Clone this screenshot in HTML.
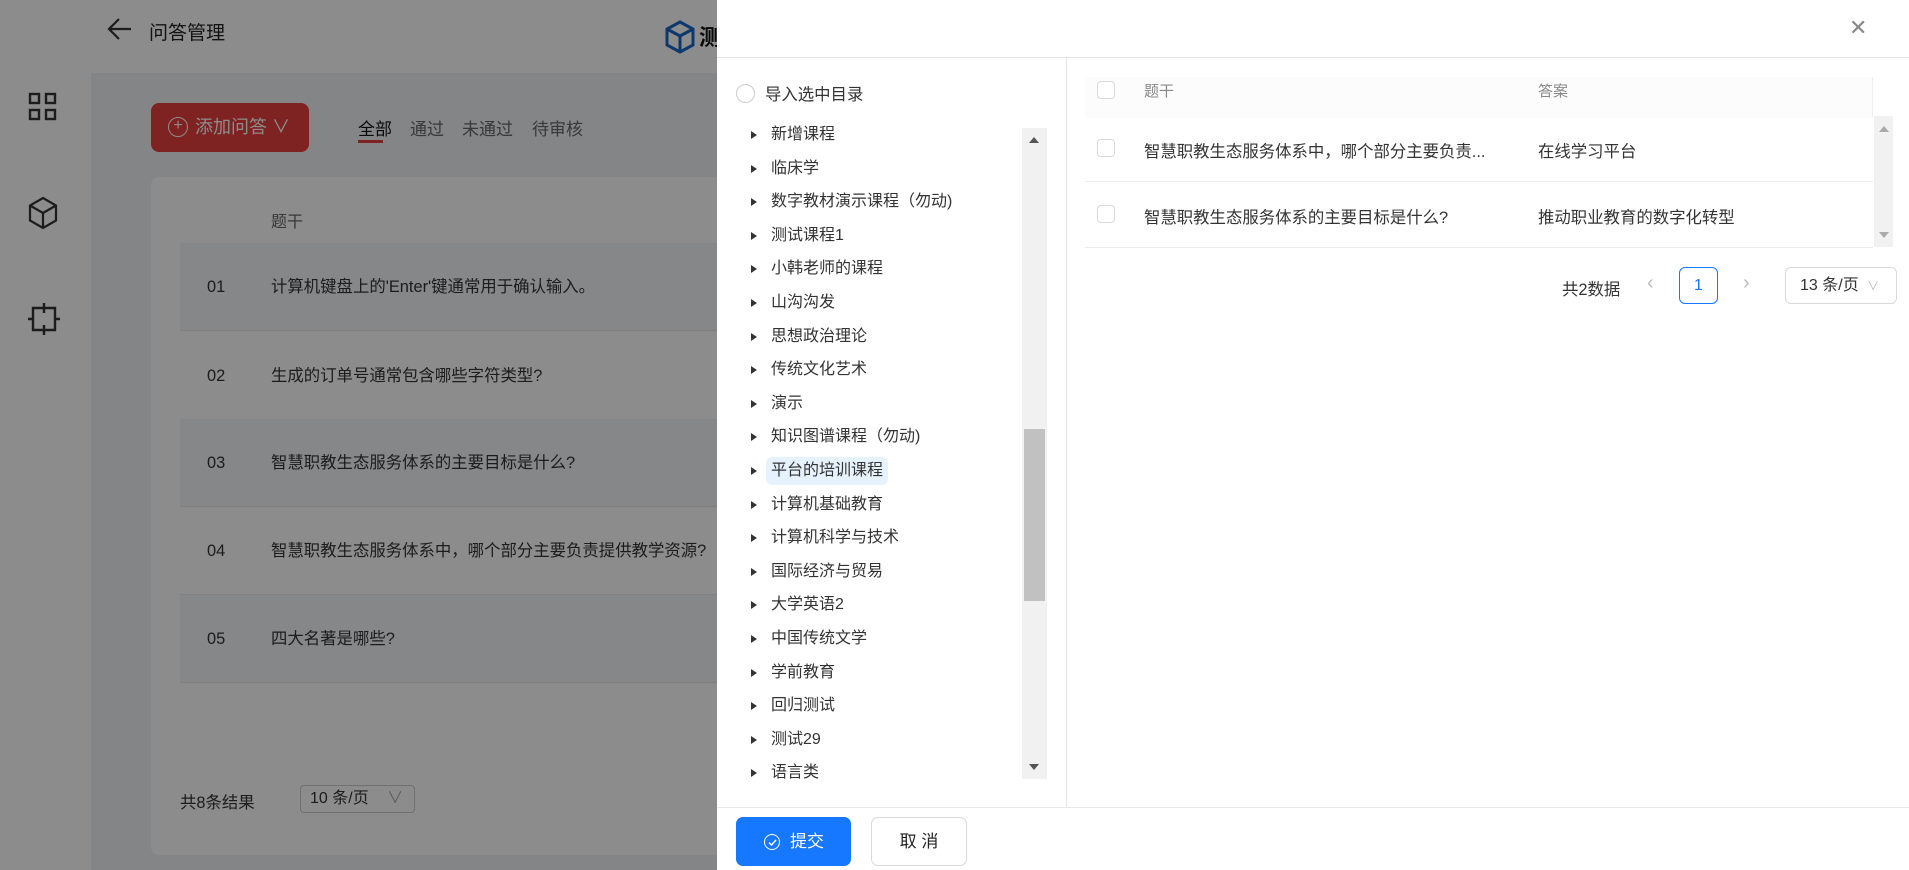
<!DOCTYPE html>
<html><head><meta charset="utf-8"><style>
*{box-sizing:border-box;margin:0;padding:0}
body{width:1909px;height:870px;overflow:hidden;position:relative;font-family:"Liberation Sans","Noto Sans CJK SC",sans-serif;background:#f0f2f5;color:#333}
.abs{position:absolute}
.side{left:0;top:0;width:91px;height:870px;background:#fff}
.hdr{left:91px;top:0;width:1818px;height:73px;background:#fff}
.card{left:151px;top:177px;width:1700px;height:678px;background:#fff;border-radius:8px}
.row{left:180px;width:1600px;height:88px;border-bottom:1px solid #e8e8e8;font-size:16.4px;color:#333;line-height:88px}
.row.s{background:#f5f6f8}
.row .n{position:absolute;left:27px;top:0}
.row .t{position:absolute;left:91px;top:0}
.mask{left:0;top:0;width:1909px;height:870px;background:rgba(0,0,0,.45)}
.drawer{left:717px;top:0;width:1192px;height:870px;background:#fff}
.ti{position:absolute;left:54px;font-size:16px;color:#333;height:28px;line-height:28px;white-space:nowrap}
.ti:before{content:"";position:absolute;left:-20px;top:10px;border-left:6px solid #333;border-top:4px solid transparent;border-bottom:4px solid transparent}
.ti span{padding:0 5px;margin-left:-5px;border-radius:6px}
.cb{position:absolute;width:18px;height:18px;border:1px solid #d9d9d9;border-radius:4px;background:#fff}
</style></head><body>
<div class="abs side">
<svg class="abs" style="left:28px;top:92px" width="30" height="30" viewBox="0 0 30 30" fill="none" stroke="#333" stroke-width="2.4"><rect x="2" y="2" width="9" height="9"/><rect x="18" y="2" width="9" height="9"/><rect x="2" y="18" width="9" height="9"/><rect x="18" y="18" width="9" height="9"/></svg>
<svg class="abs" style="left:27px;top:196px" width="32" height="34" viewBox="0 0 32 34" fill="none" stroke="#333" stroke-width="2.2"><path d="M16 2L29 9.5V24.5L16 32L3 24.5V9.5Z M3 9.5L16 17L29 9.5 M16 17V32"/></svg>
<svg class="abs" style="left:27px;top:302px" width="34" height="34" viewBox="0 0 34 34" fill="none" stroke="#333" stroke-width="2.4"><path d="M6 6H28V28H6Z M17 1V11 M17 23V33 M1 17H6 M28 17H33"/></svg>
</div>
<div class="abs hdr">
<svg class="abs" style="left:16px;top:17px" width="26" height="24" viewBox="0 0 26 24" fill="none" stroke="#333" stroke-width="2.2"><path d="M24 12H3 M12 2L2 12L12 22"/></svg>
<div class="abs" style="left:58px;top:18px;font-size:19px;color:#222">问答管理</div>
<svg class="abs" style="left:574px;top:20px" width="30" height="34" viewBox="0 0 30 34" fill="none" stroke="#1767c8" stroke-width="3"><path d="M15 2L28 9V25L15 32L2 25V9Z M2 9L15 16L28 9 M15 16V32"/></svg>
<div class="abs" style="left:608px;top:20px;font-size:22px;font-weight:bold;color:#111">测</div>
</div>
<div class="abs" style="left:151px;top:103px;width:158px;height:49px;background:#e53e3e;border-radius:8px;color:#fff;font-size:18px;line-height:49px;padding-left:44px">添加问答 ∨</div>
<div class="abs" style="left:168px;top:117px;width:20px;height:20px;border:1.5px solid #fff;border-radius:50%;color:#fff;font-size:16px;line-height:16px;text-align:center">+</div>
<div class="abs" style="left:358px;top:115px;font-size:17px;color:#111">全部</div>
<div class="abs" style="left:358px;top:140px;width:25px;height:3px;background:#e53e3e"></div>
<div class="abs" style="left:410px;top:115px;font-size:17px;color:#666">通过</div>
<div class="abs" style="left:462px;top:115px;font-size:17px;color:#666">未通过</div>
<div class="abs" style="left:532px;top:115px;font-size:17px;color:#666">待审核</div>
<div class="abs card"></div>
<div class="abs" style="left:271px;top:208px;font-size:16px;color:#666">题干</div>
<div class="abs row s" style="top:243px"><span class="n">01</span><span class="t">计算机键盘上的'Enter'键通常用于确认输入。</span></div>
<div class="abs row" style="top:332px"><span class="n">02</span><span class="t">生成的订单号通常包含哪些字符类型?</span></div>
<div class="abs row s" style="top:419px"><span class="n">03</span><span class="t">智慧职教生态服务体系的主要目标是什么?</span></div>
<div class="abs row" style="top:507px"><span class="n">04</span><span class="t">智慧职教生态服务体系中，哪个部分主要负责提供教学资源?</span></div>
<div class="abs row s" style="top:595px"><span class="n">05</span><span class="t">四大名著是哪些?</span></div>
<div class="abs" style="left:180px;top:789px;font-size:16.4px;color:#333">共8条结果</div>
<div class="abs" style="left:300px;top:785px;width:115px;height:28px;border:1px solid #ccc;border-radius:4px;font-size:16px;line-height:26px;padding-left:9px;color:#333;white-space:nowrap">10 条/页 <span style="color:#aaa;margin-left:14px">∨</span></div>
<div class="abs mask"></div>
<div class="abs drawer">
<div class="abs" style="left:0;top:57px;width:1192px;height:1px;background:#e5e5e5"></div>
<div class="abs" style="left:1132px;top:15px;font-size:22px;color:#888">✕</div>
<div class="abs" style="left:349px;top:58px;width:1px;height:749px;background:#e5e5e5"></div>
<div class="abs" style="left:19px;top:84px;width:19px;height:19px;border:1px solid #ccc;border-radius:50%"></div>
<div class="abs" style="left:48px;top:81px;font-size:16.4px;color:#333">导入选中目录</div>
<div class="abs" style="left:0;top:121px;width:349px;height:660px">
<div class="ti" style="top:0"><span>新增课程</span></div>
<div class="ti" style="top:33.6px"><span>临床学</span></div>
<div class="ti" style="top:67.2px"><span>数字教材演示课程（勿动)</span></div>
<div class="ti" style="top:100.8px"><span>测试课程1</span></div>
<div class="ti" style="top:134.4px"><span>小韩老师的课程</span></div>
<div class="ti" style="top:168px"><span>山沟沟发</span></div>
<div class="ti" style="top:201.6px"><span>思想政治理论</span></div>
<div class="ti" style="top:235.2px"><span>传统文化艺术</span></div>
<div class="ti" style="top:268.8px"><span>演示</span></div>
<div class="ti" style="top:302.4px"><span>知识图谱课程（勿动)</span></div>
<div class="ti" style="top:336px"><span style="background:#e6f3ff;display:inline-block;height:28px">平台的培训课程</span></div>
<div class="ti" style="top:369.6px"><span>计算机基础教育</span></div>
<div class="ti" style="top:403.2px"><span>计算机科学与技术</span></div>
<div class="ti" style="top:436.8px"><span>国际经济与贸易</span></div>
<div class="ti" style="top:470.4px"><span>大学英语2</span></div>
<div class="ti" style="top:504px"><span>中国传统文学</span></div>
<div class="ti" style="top:537.6px"><span>学前教育</span></div>
<div class="ti" style="top:571.2px"><span>回归测试</span></div>
<div class="ti" style="top:604.8px"><span>测试29</span></div>
<div class="ti" style="top:638.4px"><span>语言类</span></div>
</div>
<div class="abs" style="left:305px;top:128px;width:25px;height:651px;background:#f1f1f1"></div>
<div class="abs" style="left:307px;top:429px;width:21px;height:172px;background:#c1c1c1"></div>
<div class="abs" style="left:312px;top:137px;border-bottom:6px solid #555;border-left:5px solid transparent;border-right:5px solid transparent"></div>
<div class="abs" style="left:312px;top:764px;border-top:6px solid #555;border-left:5px solid transparent;border-right:5px solid transparent"></div>
<div class="abs" style="left:368px;top:77px;width:788px;height:41px;background:#fcfcfc"></div>
<div class="abs" style="left:1155px;top:77px;width:1px;height:40px;background:#f0f0f0"></div>
<div class="cb" style="left:380px;top:81px"></div>
<div class="abs" style="left:427px;top:80px;font-size:15px;color:#888">题干</div>
<div class="abs" style="left:821px;top:80px;font-size:15px;color:#888">答案</div>
<div class="abs" style="left:368px;top:181px;width:788px;height:1px;background:#ececec"></div>
<div class="abs" style="left:368px;top:247px;width:788px;height:1px;background:#ececec"></div>
<div class="cb" style="left:380px;top:139px"></div>
<div class="abs" style="left:427px;top:138px;font-size:16.4px">智慧职教生态服务体系中，哪个部分主要负责...</div>
<div class="abs" style="left:821px;top:138px;font-size:16.4px">在线学习平台</div>
<div class="cb" style="left:380px;top:205px"></div>
<div class="abs" style="left:427px;top:204px;font-size:16.4px">智慧职教生态服务体系的主要目标是什么?</div>
<div class="abs" style="left:821px;top:204px;font-size:16.4px">推动职业教育的数字化转型</div>
<div class="abs" style="left:1157px;top:116px;width:19px;height:131px;background:#f1f1f1"></div>
<div class="abs" style="left:1162px;top:126px;border-bottom:6px solid #aaa;border-left:5px solid transparent;border-right:5px solid transparent"></div>
<div class="abs" style="left:1162px;top:232px;border-top:6px solid #aaa;border-left:5px solid transparent;border-right:5px solid transparent"></div>
<div class="abs" style="left:845px;top:276px;font-size:16.4px;white-space:nowrap">共2数据</div>
<div class="abs" style="left:930px;top:272px;font-size:20px;color:#bbb">‹</div>
<div class="abs" style="left:962px;top:267px;width:39px;height:37px;border:1px solid #1677ff;border-radius:6px;color:#1677ff;font-size:16px;line-height:35px;text-align:center">1</div>
<div class="abs" style="left:1026px;top:272px;font-size:20px;color:#bbb">›</div>
<div class="abs" style="left:1068px;top:267px;width:112px;height:37px;border:1px solid #d9d9d9;border-radius:6px;font-size:16px;line-height:35px;padding-left:14px;white-space:nowrap">13 条/页 <span style="color:#bbb;font-size:12px;margin-left:4px">∨</span></div>
<div class="abs" style="left:0;top:807px;width:1192px;height:1px;background:#e8e8e8"></div>
<div class="abs" style="left:19px;top:817px;width:115px;height:49px;background:#1677ff;border-radius:7px;color:#fff;font-size:17px;line-height:49px;padding-left:54px">提交</div>
<div class="abs" style="left:47px;top:834px;width:16px;height:16px;border:1.5px solid #fff;border-radius:50%"></div>
<svg class="abs" style="left:51px;top:839px" width="9" height="7" viewBox="0 0 9 7" fill="none" stroke="#fff" stroke-width="1.5"><path d="M1 3.5L3.5 6L8 1"/></svg>
<div class="abs" style="left:154px;top:817px;width:96px;height:49px;border:1px solid #d9d9d9;border-radius:7px;font-size:17px;line-height:47px;text-align:center;color:#222">取 消</div>
</div>
</body></html>
